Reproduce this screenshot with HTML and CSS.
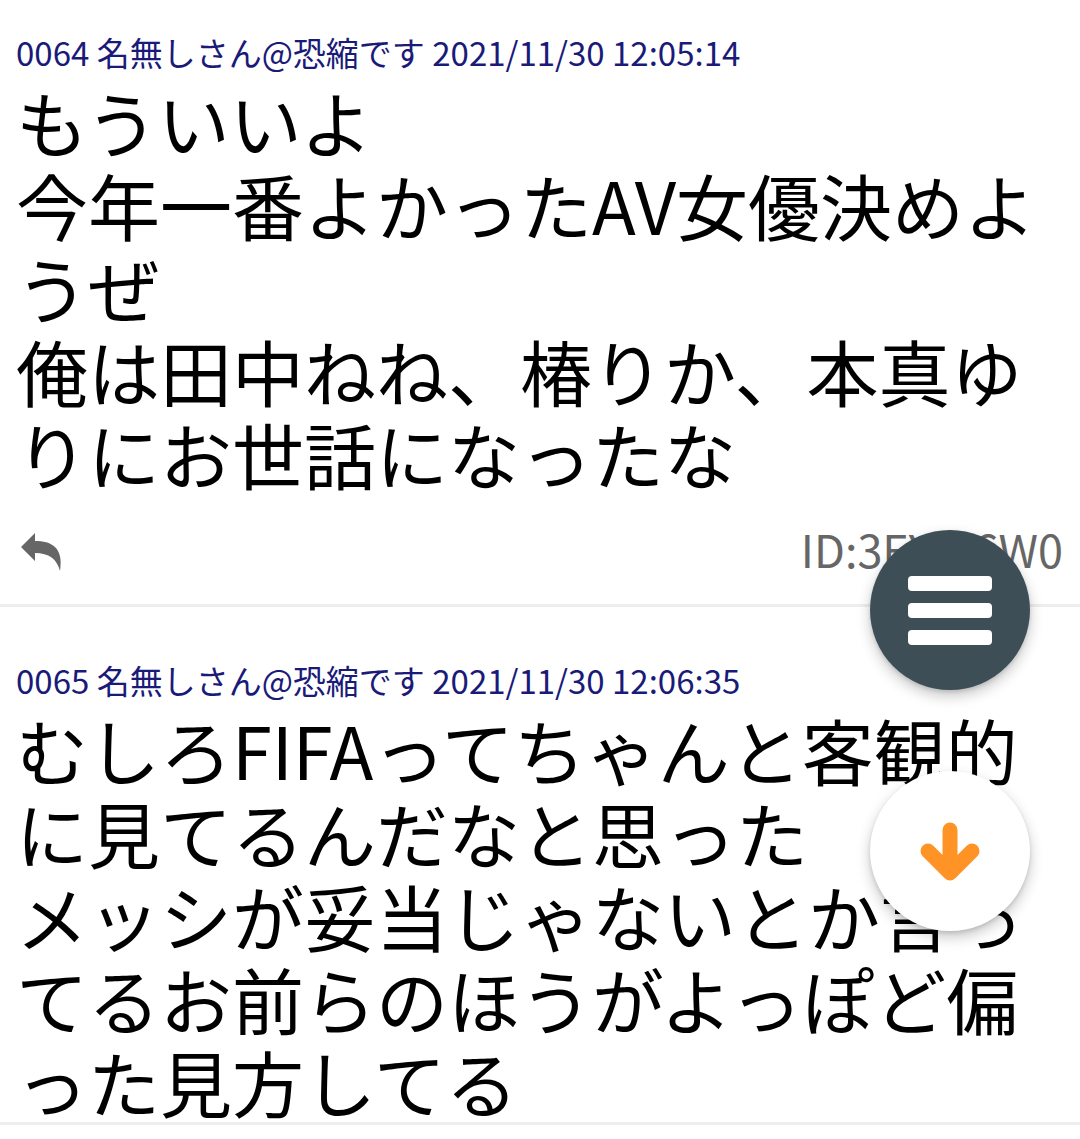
FILE: index.html
```html
<!DOCTYPE html>
<html lang="ja">
<head>
<meta charset="utf-8">
<title>スレッド</title>
<link rel="stylesheet" href="styles.css">
</head>
<body>
<main class="thread">
  <article class="post">
    <div class="post-header">0064 名無しさん@恐縮です 2021/11/30 12:05:14</div>
    <div class="post-body">もういいよ<br>今年一番よかったAV女優決めようぜ<br>俺は田中ねね、椿りか、本真ゆりにお世話になったな</div>
    <div class="post-footer">
      <svg class="reply-icon" width="44" height="40" viewBox="0 0 44 40">
        <path d="M1 15 L15 1 L15 9 C31 9 44 15 40 39 C37 27 29 21 15 21 L15 29 Z" fill="#666"/>
      </svg>
      <span class="post-id">ID:3EYkt6W0</span>
    </div>
  </article>
  <article class="post">
    <div class="post-header">0065 名無しさん@恐縮です 2021/11/30 12:06:35</div>
    <div class="post-body">むしろFIFAってちゃんと客観的に見てるんだなと思った<br>メッシが妥当じゃないとか言ってるお前らのほうがよっぽど偏った見方してる</div>
  </article>
</main>
<button class="fab fab-menu" aria-label="メニュー">
  <span class="bar"></span><span class="bar"></span><span class="bar"></span>
</button>
<button class="fab fab-down" aria-label="下へ">
  <svg width="160" height="160" viewBox="0 0 160 160">
    <path d="M80 59 V102 M58 80 L80 102 L102 80" fill="none" stroke="#ff9326" stroke-width="15" stroke-linecap="round" stroke-linejoin="round"/>
  </svg>
</button>
</body>
</html>
```

FILE: styles.css
```css
html, body {
  margin: 0;
  padding: 0;
  background: #fff;
}
body {
  font-family: "Noto Sans CJK JP", sans-serif;
  color: #000;
  width: 1080px;
  height: 1139px;
  overflow: hidden;
}
.thread {
  display: flex;
  flex-direction: column;
}
.post {
  padding: 53px 16px 0 16px;
  border-bottom: 3px solid #eeeeee;
}
.post:first-child {
  padding-top: 32px;
}
.post-header {
  font-size: 33px;
  line-height: 40px;
  color: #1a1a78;
}
.post-body {
  font-size: 72px;
  line-height: 83px;
  margin-top: 7px;
  line-break: normal;
}
.post-footer {
  display: flex;
  justify-content: space-between;
  align-items: center;
  height: 56px;
  margin-top: 30px;
  margin-bottom: 24px;
}
.reply-icon {
  display: block;
  margin-left: 4px;
}
.post-id {
  font-size: 45px;
  line-height: 50px;
  color: #666;
  margin-right: 1px;
  margin-bottom: 6px;
  margin-left: auto;
}
.fab {
  position: fixed;
  right: 50px;
  width: 160px;
  height: 160px;
  border-radius: 50%;
  border: none;
  padding: 0;
  display: flex;
  flex-direction: column;
  align-items: center;
  justify-content: center;
  box-shadow: 0 6px 14px rgba(0,0,0,0.22), 0 2px 4px rgba(0,0,0,0.12);
}
.fab-menu {
  top: 530px;
  background: #3d4e57;
  gap: 12px;
}
.bar {
  display: block;
  width: 84px;
  height: 15px;
  border-radius: 4px;
  background: #fff;
}
.fab-down {
  top: 771px;
  background: #fff;
}
.fab-down svg {
  display: block;
}
```
